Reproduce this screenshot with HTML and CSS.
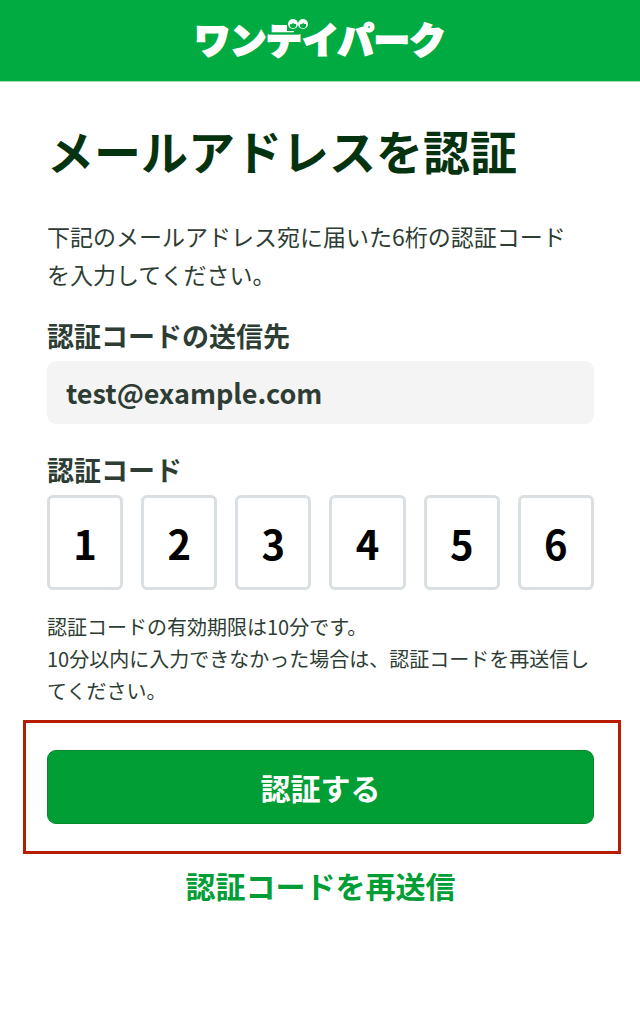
FILE: index.html
```html
<!DOCTYPE html>
<html lang="ja">
<head>
    <meta charset="UTF-8">
    <meta name="viewport" content="width=device-width, initial-scale=1">
    <title>メールアドレスを認証 | ワンデイパーク</title>
    <link rel="stylesheet" href="styles.css">
</head>
<body>

<header class="header">
    <div class="logo">
        ワン<span class="logo-de">デ<svg class="logo-eyes" viewBox="0 0 22 13" aria-hidden="true">
            <rect width="22" height="13" fill="#00ab41"/>
            <circle cx="6" cy="6" r="5" fill="#fff"/>
            <circle cx="16" cy="6" r="5" fill="#fff"/>
            <path d="M3 6A3.200 3.200 0 1 0 9 6A2.600 2.600 0 0 1 6 4.500A2 2 0 0 1 3 6Z" fill="#00ab41"/>
            <path d="M13 6A3.200 3.200 0 1 0 19 6A2.600 2.600 0 0 1 16 4.500A2 2 0 0 1 13 6Z" fill="#00ab41"/>
        </svg></span>イパーク
    </div>
</header>

<main class="content">
    <h1>メールアドレスを認証</h1>
    <p class="lead">下記のメールアドレス宛に届いた6桁の認証コード<br>を入力してください。</p>

    <form>
        <label class="label" for="email">認証コードの送信先</label>
        <input class="email" id="email" type="email" value="test@example.com" readonly>

        <fieldset class="code">
            <legend class="label">認証コード</legend>
            <div class="digits">
                <input type="text" inputmode="numeric" maxlength="1" value="1" aria-label="認証コード 1桁目">
                <input type="text" inputmode="numeric" maxlength="1" value="2" aria-label="認証コード 2桁目">
                <input type="text" inputmode="numeric" maxlength="1" value="3" aria-label="認証コード 3桁目">
                <input type="text" inputmode="numeric" maxlength="1" value="4" aria-label="認証コード 4桁目">
                <input type="text" inputmode="numeric" maxlength="1" value="5" aria-label="認証コード 5桁目">
                <input type="text" inputmode="numeric" maxlength="1" value="6" aria-label="認証コード 6桁目">
            </div>
        </fieldset>

        <p class="note">認証コードの有効期限は10分です。<br>10分以内に入力できなかった場合は、認証コードを再送信してください。</p>

        <div class="highlight">
            <button class="submit" type="submit">認証する</button>
        </div>
    </form>

    <a class="resend" href="#">認証コードを再送信</a>
</main>

</body>
</html>
```
FILE: styles.css
```css
* {
    box-sizing: border-box;
}
body {
    margin: 0;
    background: #fff;
    color: #2e3d34;
    font-family: "Noto Sans CJK JP", sans-serif;
}
input, button {
    font-family: inherit;
}
.header {
    display: flex;
    justify-content: center;
    height: 82px;
    padding-top: 18px;
    background: #00ab41;
    border-bottom: 1px solid #a5dcb8;
}
.logo {
    color: #fff;
    font-size: 36px;
    font-weight: 900;
    line-height: 40px;
    -webkit-text-stroke: 2px #fff;
}
.logo-de {
    position: relative;
}
/* eyes sit where the voicing marks would be */
.logo-eyes {
    position: absolute;
    top: 6px;
    right: -7px;
    width: 22px;
    height: 13px;
}
.content {
    padding: 36px 46px 40px 47px;
}
h1 {
    margin: 0 0 35px;
    color: #06330f;
    font-size: 47px;
    font-weight: 700;
    line-height: 64px;
}
.lead {
    margin: 0 0 24px;
    font-size: 23px;
    line-height: 38px;
}
.label {
    display: block;
    margin-bottom: 6px;
    padding: 0;
    font-size: 27px;
    font-weight: 700;
    line-height: 38px;
}
.email {
    display: block;
    width: 100%;
    height: 63px;
    padding: 0 19px;
    border: none;
    border-radius: 9px;
    background: #f4f4f4;
    color: inherit;
    font-size: 27px;
    font-weight: 700;
}
.code {
    margin: 27px 0 0;
    padding: 0;
    border: none;
}
.digits {
    display: grid;
    grid-template-columns: repeat(6, 1fr);
    gap: 18px;
}
.digits input {
    width: 100%;
    height: 95px;
    padding: 0;
    border: 3px solid #d9dfe2;
    border-radius: 6px;
    background: #fff;
    color: #000;
    font-size: 40px;
    font-weight: 700;
    text-align: center;
}
.note {
    margin: 21px 0 13px;
    font-size: 20px;
    line-height: 32px;
}
.highlight {
    margin: 0 -27px 0 -24px;
    padding: 27px 24px 27px 21px;
    border: 3px solid #b81c00;
}
.submit {
    display: block;
    width: 100%;
    height: 74px;
    border: 1px solid #078a2c;
    border-radius: 9px;
    background: #009e35;
    color: #fff;
    font-size: 30px;
    font-weight: 700;
    cursor: pointer;
}
.submit:hover {
    background: #008c2f;
}
.resend {
    display: block;
    margin-top: 12px;
    color: #009e35;
    font-size: 30px;
    font-weight: 700;
    line-height: 38px;
    text-align: center;
    text-decoration: none;
}
```
